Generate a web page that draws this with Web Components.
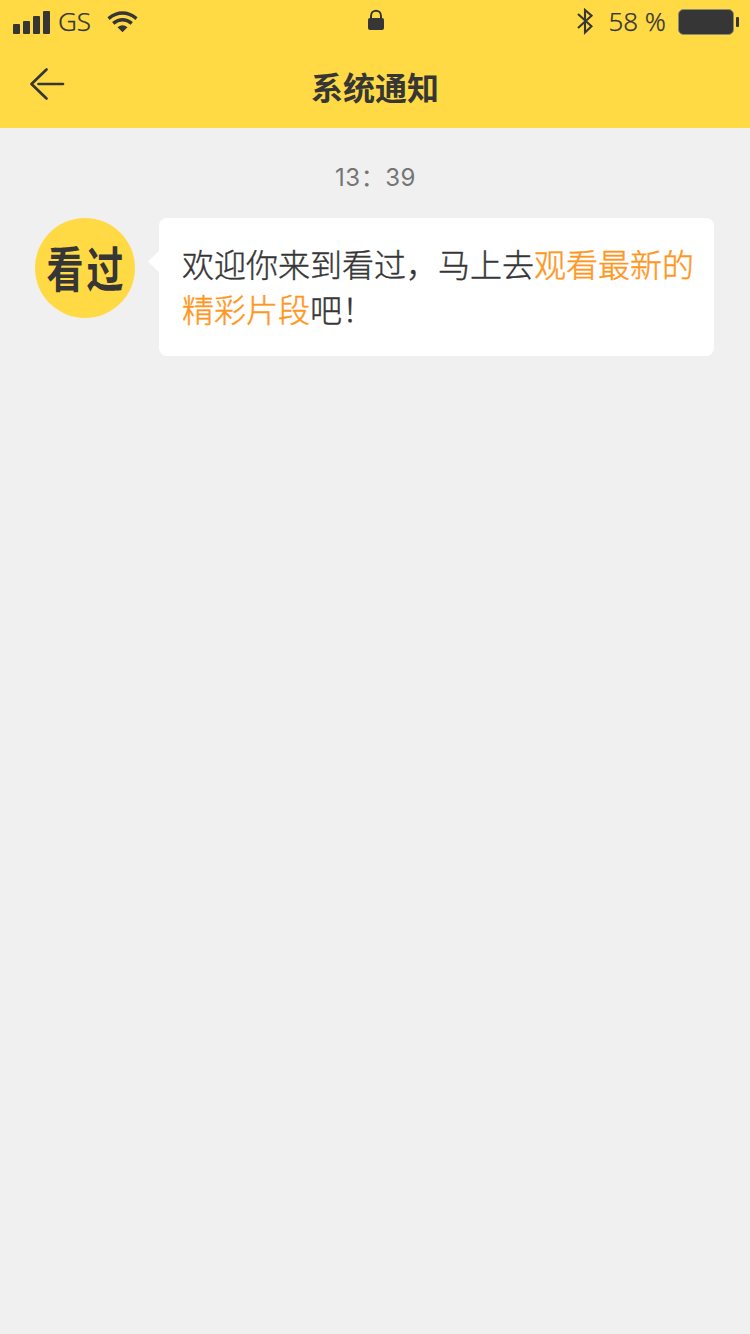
<!DOCTYPE html>
<html lang="zh-CN">
<head>
<meta charset="utf-8">
<title>系统通知</title>
<style>
html,body{margin:0;height:100%}
body{background:#f0f0f0;color:#363636;font-family:"Noto Sans CJK SC",sans-serif}
</style>
</head>
<body>
<notice-page>
  <status-bar slot="top" carrier="GS" level="58 %"></status-bar>
  <nav-bar slot="top">系统通知</nav-bar>
  <time-stamp>13：39</time-stamp>
  <chat-message><brand-avatar slot="avatar"><span>看</span><span>过</span></brand-avatar>欢迎你来到看过，马上去<link-text>观看最新的精彩片段</link-text>吧！</chat-message>
</notice-page>
<script>
const define = (name, markup) => customElements.define(name, class extends HTMLElement {
  constructor() {
    super();
    const root = this.attachShadow({mode: 'open'});
    root.innerHTML = markup;
    root.querySelectorAll('[data-attr]').forEach(n => n.textContent = this.getAttribute(n.dataset.attr));
  }
});

define('status-bar', `
<style>
:host{display:grid;grid-template-columns:1fr auto 1fr;height:44px;font:300 26px/42px "Noto Sans",sans-serif;-webkit-text-stroke:.25px #363636}
div{display:flex;align-items:flex-start}
svg{display:block;fill:#363636}
.l{padding-left:13px}.r{justify-content:flex-end;padding-right:11px}
.bars{margin:11px 8px 0 0}.wifi{margin:11px 0 0 16px}.lock{margin:9px 0 0 2px}
.bt{margin:8px 15px 0 0}.bat{margin:9px 0 0 12px}
</style>
<div class="l">
<svg class="bars" width="37" height="23"><rect y="13" width="7" height="10" rx="1"/><rect x="10" y="10" width="7" height="13" rx="1"/><rect x="20" y="5" width="7" height="18" rx="1"/><rect x="30" width="7" height="23" rx="1"/></svg>
<span data-attr="carrier"></span>
<svg class="wifi" width="31" height="22" viewBox="0 0 31 22"><g fill="none" stroke="#363636" stroke-width="3.4"><path d="M1.5 7.6Q15.5-3.4 29.5 7.6"/><path d="M6.2 12.4Q15.5 4.9 24.8 12.4"/></g><path d="M10.5 16.3Q15.5 12.3 20.5 16.3L15.5 21.2z"/></svg>
</div>
<div><svg class="lock" width="18" height="22" viewBox="0 0 18 22"><rect x="1" y="9" width="16" height="12" rx="2"/><path d="M4 10V7C4 0 14 0 14 7V10" fill="none" stroke="#363636" stroke-width="2"/></svg></div>
<div class="r">
<svg class="bt" width="17" height="27" viewBox="0 0 17 27"><path d="M2 6L15.5 18.3 9 24.5V2L15.5 7.7 2 20" fill="none" stroke="#363636" stroke-width="2.1"/></svg>
<span data-attr="level"></span>
<svg class="bat" width="61" height="27" viewBox="0 0 61 27"><rect x=".5" y=".5" width="55" height="25" rx="5" stroke="#8f8a72"/><rect x="58" y="8" width="3" height="10" rx="1"/></svg>
</div>`);

define('nav-bar', `
<style>
:host{display:grid;grid-template-columns:1fr auto 1fr;height:84px}
svg{margin:23px 0 0 29px}
h1{margin:0;font-size:32px;font-weight:700;line-height:84px}
</style>
<svg width="37" height="35" fill="none" stroke="#363636" stroke-width="2.7" stroke-linecap="round" stroke-linejoin="round"><path d="M17.5 2.5L2.5 17 17.5 31.5M9.5 17H34"/></svg>
<h1><slot></slot></h1>`);

define('time-stamp', `
<style>:host{display:block;text-align:center;color:#757575;font:400 24px/36px Inter,"Noto Sans CJK SC",sans-serif;margin:32px 0 22px;padding-left:1px;letter-spacing:.5px}</style><slot></slot>`);

define('brand-avatar', `
<style>
:host{display:flex;align-items:center;justify-content:center;gap:3px;box-sizing:border-box;width:100px;height:100px;padding-bottom:5px;border-radius:50%;background:#ffda44;font:700 37px/50px "Noto Sans CJK SC",sans-serif}
::slotted(span){display:block;transform:scaleY(1.3)}
</style><slot></slot>`);

define('link-text', `<style>:host{display:inline;color:#ff961e}</style><slot></slot>`);

define('chat-message', `
<style>
:host{display:flex;align-items:flex-start;padding:0 36px 0 35px}
.bubble{position:relative;box-sizing:border-box;flex:1;height:138px;margin-left:24px;padding:23px 18px 0 23px;border-radius:8px;background:#fff;font-size:32px;font-weight:300;line-height:45px;text-spacing-trim:space-all;-webkit-text-stroke:.4px currentColor}
.bubble::before{content:"";position:absolute;left:-11px;top:32px;width:12px;height:23px;background:#fff;clip-path:polygon(0 50%,100% 0,100% 100%)}
</style><slot name="avatar"></slot><div class="bubble"><slot></slot></div>`);

define('notice-page', `
<style>
:host{display:flex;flex-direction:column;min-height:100vh}
header{background:#ffda44;height:128px}
</style><header><slot name="top"></slot></header><main><slot></slot></main>`);
</script>
</body>
</html>
